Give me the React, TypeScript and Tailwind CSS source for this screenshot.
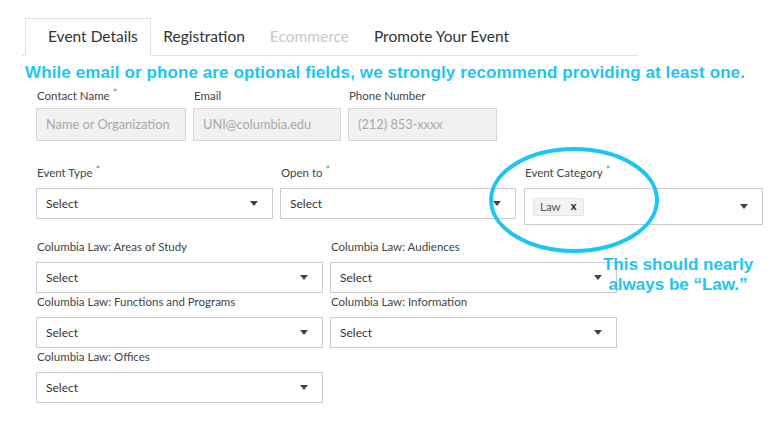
import React from "react";

const Arrow = () => (
  <svg width="8" height="5" viewBox="0 0 8 5" className="shrink-0">
    <path d="M0 0 L8 0 L4 5 Z" fill="#444" />
  </svg>
);

const Req = () => <span className="text-[#2fc12f] text-[11px] align-top ml-[3px] relative -top-[3px]">*</span>;

const Label = ({ children, req }: { children: React.ReactNode; req?: boolean }) => (
  <div className="text-[11.5px] text-[#444] leading-[14px] h-[14px] whitespace-nowrap">
    {children}
    {req && <Req />}
  </div>
);

const Select = ({ w, h = 31 }: { w: number; h?: number }) => (
  <div
    className="border border-[#ccc] bg-white flex items-center justify-between pl-[9px] pr-[14px] text-[12px] text-[#333]"
    style={{ width: w, height: h }}
  >
    <span>Select</span>
    <Arrow />
  </div>
);

const Input = ({ w, ph }: { w: number; ph: string }) => (
  <div
    className="border border-[#d6d6d6] bg-[#f1f1f1] h-[33px] flex items-center pl-[9px] text-[12.8px] text-[#a8a8a8] whitespace-nowrap"
    style={{ width: w }}
  >
    {ph}
  </div>
);

export default function App() {
  return (
    <div className="w-[768px] h-[437px] bg-white relative overflow-hidden font-['Lato','Open_Sans',sans-serif]">
      {/* Tabs */}
      <div className="ml-[22px] mt-[18px] w-[616px] h-[38px] border-b border-[#e2e2e2] flex items-end">
        <div className="ml-[3px] h-[38px] pl-[22px] pr-[12px] border border-[#e2e2e2] border-b-white bg-white -mb-px flex items-center text-[15.5px] text-[#333]">
          Event Details
        </div>
        <div className="h-[37px] px-[12.5px] flex items-center text-[15.5px] text-[#333]">Registration</div>
        <div className="h-[37px] px-[12.5px] flex items-center text-[15.5px] text-[#c8c8c8]">Ecommerce</div>
        <div className="h-[37px] px-[12.5px] flex items-center text-[15.5px] text-[#333]">Promote Your Event</div>
      </div>

      {/* Annotation */}
      <div className="ml-[25px] mt-[7px] text-[17px] leading-[20px] font-bold text-[#1cc6f2] tracking-[0.1px] font-['Liberation_Sans',Arial,sans-serif] whitespace-nowrap">
        While email or phone are optional fields, we strongly recommend providing at least one.
      </div>

      {/* Form */}
      <div className="ml-[36px] mt-[6px]">
        <div className="flex gap-[7px]">
          <div className="flex flex-col gap-[5px]">
            <div className="pl-px"><Label req>Contact Name</Label></div>
            <Input w={150} ph="Name or Organization" />
          </div>
          <div className="flex flex-col gap-[5px]">
            <div className="pl-px"><Label>Email</Label></div>
            <Input w={148} ph="UNI@columbia.edu" />
          </div>
          <div className="flex flex-col gap-[5px]">
            <div className="pl-px"><Label>Phone Number</Label></div>
            <Input w={149} ph="(212) 853-xxxx" />
          </div>
        </div>

        <div className="flex gap-[7px] mt-[25px]">
          <div className="flex flex-col gap-[8px]">
            <div className="pl-px"><Label req>Event Type</Label></div>
            <Select w={237} />
          </div>
          <div className="flex flex-col gap-[8px]">
            <div className="pl-px"><Label req>Open to</Label></div>
            <Select w={236} />
          </div>
          <div className="flex flex-col gap-[8px] ml-[1px]">
            <div className="pl-px"><Label req>Event Category</Label></div>
            <div className="w-[239px] h-[37px] border border-[#ccc] bg-white flex items-center justify-between pl-[8px] pr-[14px]">
              <div className="h-[18px] px-[6px] bg-[#f3f3f3] border border-[#e6e6e6] flex items-center text-[11.5px] text-[#555] gap-[10px] w-[51px]">
                <span>Law</span>
                <span className="font-bold text-[#222] text-[11px]">x</span>
              </div>
              <Arrow />
            </div>
          </div>
        </div>

        <div className="flex flex-col mt-[15px]">
          <div className="flex gap-[7px]">
            <div className="flex flex-col gap-[8px]">
              <div className="pl-px"><Label>Columbia Law: Areas of Study</Label></div>
              <Select w={287} />
            </div>
            <div className="flex flex-col gap-[8px]">
              <div className="pl-px"><Label>Columbia Law: Audiences</Label></div>
              <Select w={287} />
            </div>
          </div>
          <div className="flex gap-[7px] mt-[2px]">
            <div className="flex flex-col gap-[8px]">
              <div className="pl-px"><Label>Columbia Law: Functions and Programs</Label></div>
              <Select w={287} />
            </div>
            <div className="flex flex-col gap-[8px]">
              <div className="pl-px"><Label>Columbia Law: Information</Label></div>
              <Select w={287} />
            </div>
          </div>
          <div className="flex gap-[7px] mt-[2px]">
            <div className="flex flex-col gap-[8px]">
              <div className="pl-px"><Label>Columbia Law: Offices</Label></div>
              <Select w={287} />
            </div>
          </div>
        </div>
      </div>

      {/* Circle annotation */}
      <svg className="absolute left-[488px] top-[146px]" width="172" height="108" viewBox="0 0 172 108">
        <ellipse cx="86" cy="54" rx="83" ry="51" fill="none" stroke="#1cc6f2" strokeWidth="4" />
      </svg>

      <div className="absolute left-[588px] top-[255px] w-[180px] text-center text-[17px] leading-[20px] font-bold text-[#1cc6f2] tracking-[0px] font-['Liberation_Sans',Arial,sans-serif]">
        This should nearly
        <br />
        always be “Law.”
      </div>
    </div>
  );
}
